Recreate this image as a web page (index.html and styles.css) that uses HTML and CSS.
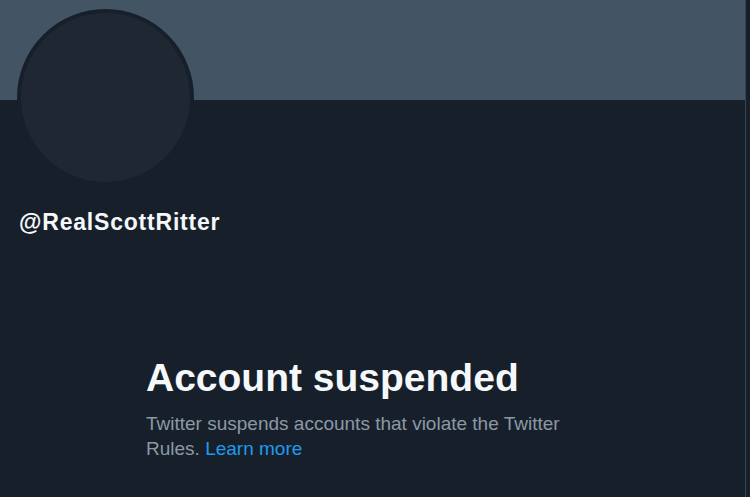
FILE: index.html
```html
<!DOCTYPE html>
<html lang="en">
<head>
<meta charset="utf-8">
<title>@RealScottRitter</title>
<link rel="stylesheet" href="styles.css">
</head>
<body>
<main class="column">
  <div class="banner"></div>
  <section class="profile">
    <div class="avatar"></div>
    <div class="handle">@RealScottRitter</div>
  </section>
  <section class="suspended">
    <h1 class="title">Account suspended</h1>
    <p class="desc">Twitter suspends accounts that violate the Twitter Rules. <a class="link" href="#">Learn more</a></p>
  </section>
</main>
</body>
</html>
```
FILE: styles.css
```css
html, body {
  margin: 0;
  padding: 0;
  background: #17202a;
  height: 100%;
}
body {
  font-family: "Liberation Sans", Arial, sans-serif;
  overflow: hidden;
}
.column {
  width: 745px;
  min-height: 497px;
  border-right: 1px solid #38444d;
  box-sizing: content-box;
}
.banner {
  height: 100px;
  background: #435465;
}
.profile {
  padding: 0 0 0 17px;
}
.avatar {
  width: 169px;
  height: 169px;
  margin-top: -91px;
  border: 4px solid #17202a;
  border-radius: 50%;
  background: #1f2832;
}
.handle {
  margin-top: 22px;
  padding-left: 2px;
  font-size: 23px;
  line-height: 28px;
  font-weight: 700;
  letter-spacing: 0.8px;
  color: #f5f8fa;
}
.suspended {
  padding-left: 146px;
  padding-top: 119px;
}
.title {
  margin: 0;
  font-size: 39px;
  line-height: 46px;
  font-weight: 700;
  color: #f5f8fa;
}
.desc {
  margin: 10px 0 0;
  max-width: 430px;
  font-size: 19px;
  line-height: 25px;
  color: #8b98a5;
}
.link {
  color: #1d9bf0;
  text-decoration: none;
}
```
